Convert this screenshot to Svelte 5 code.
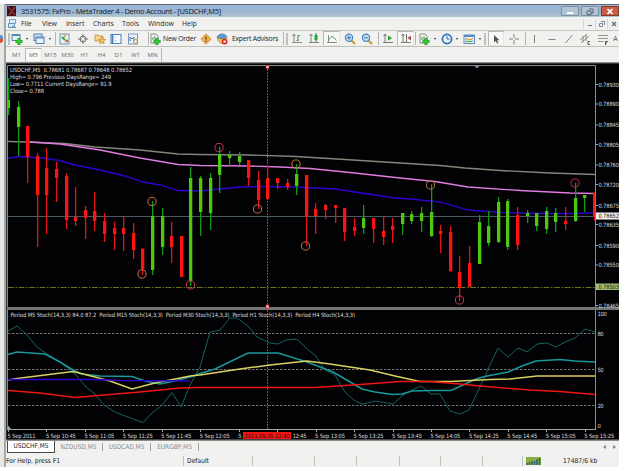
<script lang="ts">
    type Candle = [number, number, number, number, string];

    const STEP = 9.605;

    const menus: [string, number][] = [
        ['File', 21], ['View', 24], ['Insert', 27], ['Charts', 29],
        ['Tools', 26], ['Window', 34], ['Help', 20],
    ];

    // kind, cell width, pressed
    const tools: [string, number, boolean?][] = [
        ['grip', 5], ['newchart', 12], ['caret', 8], ['profiles', 16], ['caret', 5], ['sep', 4],
        ['market', 18], ['cross', 17], ['folder', 17], ['panel', 16], ['tester', 17], ['sep', 8],
        ['order', 12], ['label:New Order', 37], ['diamond', 16], ['globe', 16],
        ['label:Expert Advisors', 50], ['sep', 4], ['grip', 5],
        ['bars', 16], ['candles', 18], ['line', 17, true], ['zoomin', 20], ['zoomout', 14], ['sep', 5],
        ['scroll', 18], ['shift', 17, true], ['sep', 2], ['indicator', 16], ['caret', 6],
        ['clock', 17], ['caret', 4], ['template', 19], ['caret', 4], ['grip', 6],
        ['cursor', 16, true], ['plus', 20], ['sep', 2], ['vline', 16], ['hline', 19],
        ['diag', 15], ['channel', 18], ['fibo', 18], ['text', 7],
    ];

    const frames = ['M1', 'M5', 'M15', 'M30', 'H1', 'H4', 'D1', 'W1', 'MN'];

    // high, low, body top, body bottom, direction
    const candles: Candle[] = [
        [78, 115, 100, 108, 'up'], [101, 156, 107, 127, 'up'], [126, 183, 126, 157, 'down'],
        [153, 247, 156, 195, 'down'], [148, 234, 168, 195, 'down'], [162, 202, 169, 178, 'down'],
        [173, 229, 176, 220, 'down'], [187, 226, 217, 221, 'down'], [206, 239, 210, 218, 'down'],
        [192, 231, 211, 221, 'down'], [213, 242, 221, 234, 'down'], [222, 250, 228, 234, 'down'],
        [216, 251, 228, 234, 'down'], [223, 259, 233, 250, 'down'], [248, 275, 249, 269, 'down'],
        [201, 275, 216, 270, 'up'], [208, 255, 216, 247, 'up'], [222, 263, 236, 247, 'down'],
        [236, 277, 236, 277, 'down'], [167, 286, 178, 281, 'up'], [176, 236, 178, 212, 'up'],
        [173, 230, 178, 213, 'up'], [147, 193, 154, 175, 'up'], [151, 166, 155, 158, 'up'],
        [152, 165, 156, 162, 'up'], [160, 186, 160, 178, 'down'], [171, 209, 180, 200, 'down'],
        [165, 199, 178, 199, 'down'], [178, 189, 178, 183, 'down'], [179, 190, 183, 187, 'down'],
        [164, 195, 174, 186, 'up'], [175, 246, 175, 216, 'down'], [203, 234, 209, 216, 'down'],
        [204, 219, 205, 210, 'down'], [205, 223, 205, 208, 'down'], [208, 241, 208, 232, 'down'],
        [218, 236, 227, 231, 'down'], [205, 234, 218, 228, 'up'], [218, 243, 218, 229, 'down'],
        [216, 245, 231, 237, 'down'], [218, 243, 226, 230, 'down'], [213, 235, 213, 224, 'up'],
        [211, 224, 214, 221, 'up'], [207, 232, 213, 221, 'up'], [184, 237, 212, 236, 'up'],
        [225, 253, 231, 234, 'down'], [226, 272, 232, 271, 'down'], [256, 301, 272, 288, 'down'],
        [246, 287, 263, 287, 'down'], [215, 264, 222, 264, 'up'], [211, 246, 226, 243, 'up'],
        [197, 243, 202, 242, 'up'], [199, 250, 201, 247, 'up'], [207, 250, 215, 245, 'down'],
        [210, 223, 213, 216, 'up'], [213, 231, 213, 226, 'up'], [207, 234, 211, 229, 'up'],
        [208, 232, 213, 222, 'up'], [207, 230, 221, 224, 'down'], [183, 222, 198, 221, 'up'],
        [195, 212, 195, 198, 'up'], [192, 221, 193, 217, 'down'],
    ];

    const swings: [number, number, string][] = [
        [142, 274, '#d07048'], [152, 201.5, '#d07048'], [190.5, 285, '#c83858'],
        [219, 147.5, '#c83858'], [257.5, 209, '#d07048'], [296, 164, '#c07838'],
        [305.5, 246, '#c07838'], [430.5, 185, '#b87038'], [459.5, 300, '#c83858'],
        [575, 183, '#c82848'],
    ];

    const averages: [string, string][] = [
        ['#85857c', '8,141.5 27,142 65,143.5 95,147 140,150 178,154 200,154.5 248,155 296,156.5 345,159.5 400,163 440,165.5 465,168 500,170.5 550,173 595,174.5'],
        ['#e07ce0', '30,142 60,144 100,150 140,158 178,164.5 200,165.5 248,166 280,167 310,168.5 350,172.5 400,178 435,181.5 468,187 520,190.5 570,193 595,193.5'],
        ['#3000d0', '8,158 22,156.5 40,158 57,160 75,165 100,170 125,176 143,182 160,185 178,190.5 200,191 240,187 260,186.5 295,187 335,189 365,193.5 395,198 410,199 440,202 468,210 500,212.3 540,213.5 580,213.5 595,212.5'],
    ];

    const stoch: [string, number, string][] = [
        ['#126460', 1, '8,331 17,326 27,335 37,347 47,354 60,362 75,374 86,387 94,393 104,405 115,412 125,416 143,422.5 152,413 162,405 172,392.5 181,407 190,385 200,367 210,332 220,330 230,318 237,318 248,326 257,337 270,343 278,344 286,340 297,339 306,348 316,356 325,370 335,375 345,392 355,401 363,404 375,401 393,404 402,396 412,390 421,386 431,394 440,394 450,411 460,414 469,410 480,387 489,367 498,348 508,357 518,348 527,352 537,344 547,343 556,347 565,342 575,338 585,329 595,332'],
        ['#18989a', 1.5, '8,354.5 17,352 45,354 60,362 73,370 82,374 100,376 132,376.5 145,381 160,384 175,381 190,377 200,373.5 215,369 248,353 278,353 307,362 333,372 345,379 362,389 375,392 393,394.5 402,394 412,391 430,390.5 451,390.5 463,385 476,379 487,376 508,372 522,366 536,361 560,359.5 575,361 595,362'],
        ['#d8d060', 1.5, '8,380 17,378.5 45,375 73,371.5 95,377 110,381 132,389 155,383 190,376 200,375 240,369 270,365 307,361 330,364 350,367 370,370 395,376 420,381.5 450,381.5 490,379.5 510,379 537,376 595,376'],
        ['#3000d0', 1.5, '8,379.5 100,379.5 120,380.5 190,381'],
        ['#f01414', 1.5, '8,390.5 40,393 75,397.5 110,394.5 140,392 180,388 200,387.5 315,387.5 360,384.5 400,381.5 430,381.5 460,384 480,386 530,390 560,391.5 595,394.5'],
    ];

    const prices: [string, number][] = [
        ['0.78930', 84.5], ['0.78890', 104], ['0.78845', 125], ['0.78805', 144.5],
        ['0.78760', 165], ['0.78720', 184.5], ['0.78675', 205.5], ['0.78635', 224.5],
        ['0.78590', 245.5], ['0.78550', 265], ['0.78465', 305.5],
    ];

    const levels: [string, number][] = [['100', 313.5], ['80', 333.5], ['50', 369.5], ['20', 405.5], ['0', 426]];

    // the cursor's time flag hides part of the 12:25 and 12:45 labels
    const times: [string, number, number][] = [
        ['5 Sep 2011', 0, 28], ['5 Sep 10:45', 0, 30], ['5 Sep 11:05', 0, 30], ['5 Sep 11:25', 0, 30],
        ['5 Sep 11:45', 0, 30], ['5 Sep 12:05', 0, 30], ['5', 0, 3], ['12:45', 16, 14],
        ['5 Sep 13:05', 0, 30], ['5 Sep 13:25', 0, 30], ['5 Sep 13:45', 0, 30], ['5 Sep 14:05', 0, 30],
        ['5 Sep 14:25', 0, 30], ['5 Sep 14:45', 0, 30], ['5 Sep 15:05', 0, 30], ['5 Sep 15:25', 0, 30],
    ];

    const info: [string, number, number][] = [
        ['USDCHF,M5  0.78681 0.78687 0.78648 0.78652', 72.3, 122],
        ['High= 0.796 Previous DaysRange= 249', 78.8, 101],
        ['Low= 0.7711 Current DaysRange= 91.9', 85.8, 101.5],
        ['Close= 0.788', 92.8, 34],
    ];

    const tabs = ['USDCHF,M5', 'NZDUSD,M5', 'USDCAD,M5', 'EURGBP,M5'];
    const statusCells = [69, 62, 42, 43, 41, 42, 40];
</script>

{#snippet icon(kind: string)}
    <svg class="icon" width="12" height="12" viewBox="0 0 12 12" fill="none">
        {#if kind === 'newchart' || kind === 'indicator' || kind === 'order'}
            {#if kind === 'newchart'}
                <rect x="1" y="1.5" width="8" height="6" fill="#e4eef8" stroke="#5a86b4" />
                <path d="M1 2.5h8" stroke="#5a86b4" />
            {:else}
                <path d="M2 1h5l2 2v7H2z" fill="#f4f4f0" stroke="#8a8c84" />
                <path d="M4 7V4M6 7V3" stroke="#58906c" />
            {/if}
            <path d="M8 5v7M4.5 8.5h7" stroke="#189424" stroke-width="3" />
            <path d="M8 5.500v6M5 8.500h6" stroke="#38c838" stroke-width="1.800" />
        {:else if kind === 'profiles'}
            <rect x="1" y="1" width="8" height="6.5" fill="#cfe2f4" stroke="#5080b8" />
            <rect x="3" y="4" width="8" height="6.5" fill="#e8f2fc" stroke="#5080b8" />
            <path d="M3 5h8" stroke="#5080b8" />
        {:else if kind === 'market'}
            <rect x="1" y="1" width="9" height="10" fill="#e6f2f6" stroke="#7098b4" />
            <path d="M3 4l3 3" stroke="#30a040" stroke-width="2" />
            <path d="M5 4l2-2M6 9l3-2" stroke="#c8a030" stroke-width="1.5" />
            <path d="M7 7l2 2" stroke="#d04838" stroke-width="1.5" />
        {:else if kind === 'cross'}
            <circle cx="6" cy="6" r="3" stroke="#70706c" />
            <path d="M6 1v4M6 7v4M1 6h4M7 6h4" stroke="#70706c" />
        {:else if kind === 'folder'}
            <path d="M1 2h3l1 1h4v5H1z" fill="#f4d890" stroke="#c89850" />
            <path d="M8 4l1 2.3 2.5.2-2 1.7.7 2.5L8 9.4l-2.2 1.3.7-2.5-2-1.7 2.5-.2z" fill="#f8cc50" stroke="#c87828" stroke-width=".7" />
        {:else if kind === 'panel'}
            <rect x="1" y="1.5" width="10" height="9" fill="#f4f8fc" stroke="#4c80bc" />
            <path d="M2.500 2v8" stroke="#4c80bc" stroke-width="1.800" />
            <path d="M5 4.500h1M5 7.500h1" stroke="#90a8c0" />
        {:else if kind === 'tester'}
            <rect x="1.5" y="1" width="9" height="10" fill="#e8f0f8" stroke="#7c9cc0" />
            <path d="M3 8V4l2 2 2-2v4" stroke="#5078a8" />
            <circle cx="8.5" cy="8.5" r="2" stroke="#b49450" />
        {:else if kind === 'diamond'}
            <path d="M6 .8L11.2 6 6 11.2.8 6z" fill="#f0b050" stroke="#d09840" />
            <path d="M6 3.5v3M6 7.5V9" stroke="#60401c" stroke-width="1.3" />
        {:else if kind === 'globe'}
            <path d="M1 4c2-4 8-4 10 0L9 6H3z" fill="#5c9cd4" stroke="#3c74a8" stroke-width=".7" />
            <path d="M1 4.5c3 2 7 2 10 0-.5 4-2.5 6-5 6S1.5 8 1 4.500z" fill="#ecc45c" stroke="#b08838" stroke-width=".6" />
            <circle cx="8.6" cy="8.6" r="2.9" fill="#d82424" />
            <rect x="7.5" y="7.5" width="2.2" height="2.2" fill="#fff" />
        {:else if kind === 'bars'}
            <path d="M3 1v9M1 9.5h10M1.5 3L3 1l1.5 2" stroke="#84887e" />
            <path d="M7 2v6M7 2.5h2M5.5 7.5H7" stroke="#3c9844" />
        {:else if kind === 'candles'}
            <path d="M3 1v9M1 9.5h10M1.5 3L3 1l1.5 2" stroke="#84887e" />
            <path d="M8 0v9" stroke="#1c8c28" />
            <rect x="6.5" y="2" width="3" height="5" fill="#28a838" />
        {:else if kind === 'line'}
            <path d="M2.5 2v8M1 9.5h10" stroke="#84887e" />
            <path d="M2.5 7l3-3.5 2 .5 3 3.5" stroke="#5c946c" />
        {:else if kind === 'zoomin' || kind === 'zoomout'}
            <path d="M7.5 7.5L11 11" stroke="#c89c38" stroke-width="2.2" />
            <circle cx="5" cy="4.8" r="3.6" fill="#c4e0f4" stroke="#4884bc" stroke-width="1.2" />
            <path d={kind === 'zoomin' ? 'M5 3v3.6M3.2 4.8h3.6' : 'M3.2 4.8h3.6'} stroke="#2c68a4" />
        {:else if kind === 'scroll' || kind === 'shift'}
            <path d="M3 1v9M1 9.5h10M1.5 3L3 1l1.5 2" stroke="#787c78" />
            {#if kind === 'scroll'}
                <path d="M6 2.5L10 5 6 7.8z" fill="#28a038" />
            {:else}
                <path d="M6.5 1v8" stroke="#707470" />
                <path d="M11 2.5L7.5 5 11 7.5z" fill="#a04c40" />
            {/if}
        {:else if kind === 'clock'}
            <circle cx="6" cy="6" r="4.6" fill="#eaf4fc" stroke="#2c70b8" stroke-width="1.7" />
            <path d="M6 3v3h2.5" stroke="#48607c" />
        {:else if kind === 'template'}
            <rect x="1" y="2" width="10.5" height="8.5" fill="#f0f4e8" stroke="#5c8cc0" />
            <path d="M1 3h10.5" stroke="#5c8cc0" stroke-width="2" />
            <path d="M2 6.5l2-1 2 1.5 4-1.5" stroke="#c88430" />
            <path d="M2 9l2-1 2 .8L10 8" stroke="#3c9c4c" />
        {:else if kind === 'cursor'}
            <path d="M4 2v7.500l1.800-1.700 1.200 2.700 1.300-.6L7.100 7.200H9.500z" fill="#545458" />
        {:else if kind === 'plus'}
            <path d="M6 1v4M6 7v4.5M1 6h4M7 6h4" stroke="#84847e" />
        {:else if kind === 'vline'}
            <path d="M6.5 2v8" stroke="#84847e" />
        {:else if kind === 'hline'}
            <path d="M2.5 6.5h7" stroke="#84847e" />
        {:else if kind === 'diag'}
            <path d="M2.5 10l7-8" stroke="#84847e" />
        {:else if kind === 'channel'}
            <path d="M1 7l7-6M2 10l8-7M4 3v6M7 2v6" stroke="#74746e" stroke-width=".8" />
            <path d="M11 8.5H9v3h2" stroke="#444" stroke-width=".9" />
        {:else if kind === 'fibo'}
            <path d="M1 2.5h10M1 5.5h10M1 8.5h6" stroke="#8c8c84" stroke-width=".9" />
            <path d="M8.5 12V8.5H11M8.5 10H10" stroke="#444" stroke-width=".9" />
        {/if}
    </svg>
{/snippet}

<div class="screen">
    <div class="edge"><span class="edge-icon"></span></div>
    <div class="window">
        <header class="titlebar">
            <svg class="logo" width="9" height="10" viewBox="0 0 9 10">
                <rect width="9" height="10" fill="#38141c" />
                <path d="M1 1l3 3M8 1L2 9M5 6l3 3" stroke="#a83038" stroke-width="1.3" />
            </svg>
            <span class="title">3531575: FxPro - MetaTrader 4 - Demo Account - [USDCHF,M5]</span>
            <div class="controls">
                <button aria-label="Minimize"><svg width="8" height="7"><path d="M1 5h6" stroke="#fff" stroke-width="2" /></svg></button>
                <button aria-label="Restore"><svg width="8" height="7"><path d="M3 1h4v4H5M1 3h4v3.500H1z" fill="none" stroke="#5c6874" /></svg></button>
                <button class="close" aria-label="Close"><svg width="8" height="7"><path d="M1.500 1l5 5M6.500 1l-5 5" stroke="#fff" stroke-width="1.700" /></svg></button>
            </div>
        </header>

        <nav class="menubar">
            <svg class="menu-icon" width="9" height="10" viewBox="0 0 9 10" fill="none">
                <path d="M1.500.5h6v4h-6z" fill="#e0eef8" stroke="#78a0c4" />
                <path d="M.5 4.500h6v4h-6z" fill="#d4e8f8" stroke="#6090bc" />
                <path d="M4 7l4 2" stroke="#5c88b0" />
            </svg>
            {#each menus as [name, width]}
                <span class="menu" style:width="{width}px">{name}</span>
            {/each}
            <div class="mdi">
                <span><svg width="8" height="8"><path d="M2 5.500h4" stroke="#607890" /></svg></span>
                <span><svg width="8" height="8"><path d="M3 1.500h3.500V5M1.500 3.500h3v3h-3z" fill="none" stroke="#70889c" /></svg></span>
                <span><svg width="8" height="8"><path d="M2 2l4 4M6 2L2 6" stroke="#587088" stroke-width="1.200" /></svg></span>
            </div>
        </nav>

        <div class="toolbar">
            {#each tools as [kind, width, pressed]}
                <div class="cell" class:pressed style:width="{width}px">
                    {#if kind === 'grip'}
                        <i class="grip"></i>
                    {:else if kind === 'sep'}
                        <i class="sep"></i>
                    {:else if kind === 'caret'}
                        <i class="caret"></i>
                    {:else if kind === 'text'}
                        <span class="letter">A</span>
                    {:else if kind.startsWith('label:')}
                        <span class="label">{kind.slice(6)}</span>
                    {:else}
                        {@render icon(kind)}
                    {/if}
                </div>
            {/each}
        </div>

        <div class="frames">
            {#each frames as frame}
                <span class="frame" class:pressed={frame === 'M5'}>{frame}</span>
            {/each}
        </div>

        <svg class="chart" width="613" height="379" viewBox="6 62 613 379">
            <rect x="6" y="62" width="613" height="379" fill="#020104" />
            <path d="M6 62.500h613" stroke="#8c8c88" />
            <path d="M6 63.500h613" stroke="#303838" />
            <path d="M6.500 63v378" stroke="#303438" />
            <path d="M7.500 429.500V65.500H595.500V429.500" fill="none" stroke="#8a8c8a" />
            <path d="M7 429.500h589" stroke="#a4a4a0" />
            <rect x="7" y="307" width="612" height="3" fill="#747474" />
            <rect x="6" y="439.500" width="613" height="1.500" fill="#8c8c88" />
            <path d="M474 65.500h6l-3 3z" fill="#7890a0" />
            <path d="M8 425.500l3.500 4H8z" fill="#a0b0b8" />

            <path d="M8 216.500h587" stroke="#4a5a62" />
            <path d="M8 287.500h587" stroke="#68741c" stroke-dasharray="6 1.500 1.500 1.500" />
            {#each [333.5, 369.5, 405.5] as y}
                <path d="M8 {y}h587" stroke="#74746e" stroke-dasharray="2.500 1.500" />
            {/each}
            <path d="M267.500 66V307M267.500 310V429" stroke="#d42c48" stroke-dasharray="2 1" />

            {#each averages as [color, points]}
                <polyline {points} fill="none" stroke={color} stroke-width="1.300" />
            {/each}

            {#each candles as [high, low, top, bottom, dir], i}
                {@const x = Math.round(8 + i * STEP)}
                {@const half = i === 0 || i === 61}
                <rect class={dir + '-wick'} {x} y={high} width="1.300" height={low - high} />
                <rect class={dir} x={half && !i ? x : x - 1} y={top} width={half ? 2 : 3.3} height={bottom - top} />
            {/each}

            {#each swings as [cx, cy, color]}
                <circle {cx} {cy} r="4.100" fill="none" stroke={color} />
            {/each}

            {#each stoch as [color, width, points]}
                <polyline {points} fill="none" stroke={color} stroke-width={width} />
            {/each}

            <rect x="266" y="65.500" width="3" height="3" fill="#f0c0c0" stroke="#d02838" stroke-width=".7" />
            <rect x="266" y="305" width="3" height="3" fill="#f0c0c0" stroke="#d02838" stroke-width=".7" />

            {#each info as [line, y, length]}
                <text x="10" {y} textLength={length}>{line}</text>
            {/each}
            <text x="10.500" y="317.200" textLength="344.500">Period M5 Stoch(14,3,3) 84.0 87.2&nbsp; Period M15 Stoch(14,3,3)&nbsp; Period M30 Stoch(14,3,3)&nbsp; Period H1 Stoch(14,3,3)&nbsp; Period H4 Stoch(14,3,3)</text>

            {#each prices as [price, y]}
                <path d="M596 {y}h2" stroke="#a4a4a0" />
                <text x="598.500" y={y + 2.2} textLength="20.500">{price}</text>
            {/each}
            <rect x="596" y="212.500" width="23" height="7" fill="#f4f4f4" />
            <text class="dark" x="598.500" y="218.300" textLength="20.500">0.78652</text>
            <rect x="596" y="283.500" width="23" height="6.500" fill="#a0c070" />
            <text class="dark" x="598.500" y="289" textLength="20.500">0.78503</text>
            {#each levels as [level, y]}
                <text x="597.500" y={y + 2.2} textLength={level.length * 3.1}>{level}</text>
            {/each}

            {#each times as [time, shift, length], i}
                {@const x = 8 + i * 38.45}
                <path d="M{Math.round(x) + 0.5} 430v2" stroke="#a4a4a0" />
                <text x={x + shift - 0.5} y="437.700" textLength={length}>{time}</text>
            {/each}
            <rect x="243" y="432" width="48" height="7" fill="#f41414" />
            <text class="dark" x="244.500" y="437.700" textLength="45">2011.09.05 12:40</text>
        </svg>

        <div class="tabs">
            {#each tabs as tab, i}
                <span class="tab" class:active={i === 0}>{tab}</span>
            {/each}
            <div class="arrows"><i class="left"></i><i class="right"></i></div>
        </div>

        <footer class="status">
            <span class="help">For Help, press F1</span>
            <span class="profile">Default</span>
            {#each statusCells as width}
                <span class="slot" style:width="{width}px"></span>
            {/each}
            <svg class="signal" width="15" height="8" viewBox="0 0 15 8">
                <rect width="15" height="8" fill="#8cae40" />
                <path d="M1 8V6M3.500 8V5M6 8V4M8.500 8V4M11 8V2M13.500 8V1" stroke="#28647c" stroke-width="1.500" />
            </svg>
            <span class="traffic">17487/6 kb</span>
        </footer>
    </div>
</div>

<style>
    :global(body) {
        background: #fff;
    }

    .screen {
        display: flex;
        width: 619px;
        height: 467px;
        padding-top: 4px;
        box-sizing: border-box;
        overflow: hidden;
        font-family: "DejaVu Sans Condensed", "DejaVu Sans", sans-serif;
        font-size: 7px;
        color: #2c2c2c;
        white-space: nowrap;
    }

    .edge {
        width: 6px;
        flex: none;
        box-sizing: border-box;
        padding-top: 31px;
        background: #e6e6e2;
        border-right: 2px solid #a0a8ac;
    }

    .edge-icon {
        display: block;
        width: 3px;
        height: 8px;
        border-radius: 0 4px 4px 0;
        background: linear-gradient(#5c8cc4 50%, #e05030 50%);
    }

    .window {
        display: flex;
        flex-direction: column;
        width: 613px;
        background: #f1f1ef;
    }

    .titlebar {
        display: flex;
        align-items: center;
        height: 13px;
        box-sizing: border-box;
        border-top: 1px solid #60686c;
        background: linear-gradient(#9cb8dc, #9cb6d0 65%, #b4c8cc);
    }

    .logo {
        margin-left: 1px;
    }

    .title {
        margin-left: 5px;
        font: 7.5px "Open Sans", sans-serif;
        letter-spacing: -0.32px;
        color: #14202c;
    }

    .controls {
        display: flex;
        gap: 2px;
        margin-left: auto;
    }

    .controls button {
        display: flex;
        align-items: center;
        justify-content: center;
        width: 18px;
        height: 10px;
        padding: 0;
        border: 1px solid #7c90a4;
        background: #b0c4d4;
    }

    .controls .close {
        border-color: #803c30;
        background: #c85c44;
    }

    .menubar {
        display: flex;
        align-items: center;
        height: 14px;
        font: 7px "Open Sans", sans-serif;
        letter-spacing: -0.1px;
        box-sizing: border-box;
        border-bottom: 1px solid #c4c4c0;
    }

    .menu-icon {
        margin: 0 4px 0 2px;
    }

    .menu {
        flex: none;
    }

    .mdi {
        display: flex;
        margin-left: auto;
    }

    .mdi span {
        display: flex;
        align-items: center;
        justify-content: center;
        width: 11px;
        height: 10px;
        border-left: 1px solid #d0d8dc;
    }

    .toolbar {
        display: flex;
        height: 16px;
        box-sizing: border-box;
        border-bottom: 1px solid #c0c0b8;
    }

    .cell {
        display: flex;
        flex: none;
        align-items: center;
        justify-content: center;
    }

    .cell.pressed,
    .frame.pressed {
        box-sizing: border-box;
        border: 1px solid #b8b8b4;
        border-right-color: #e4e4e0;
        border-bottom-color: #e4e4e0;
        background: #f8f8f7;
    }

    .icon {
        flex: none;
    }

    .grip {
        width: 2px;
        height: 12px;
        background: #c0c0bc;
    }

    .sep {
        width: 1px;
        height: 13px;
        margin-left: auto;
        background: #b4b4b0;
    }

    .caret {
        border: 1.5px solid transparent;
        border-top: 2px solid #303030;
        border-bottom: 0;
    }

    .label {
        font: 6.8px "Open Sans", sans-serif;
        letter-spacing: -0.2px;
        color: #242424;
    }

    .letter {
        color: #505050;
    }

    .frames {
        display: flex;
        align-items: center;
        height: 15px;
        padding-left: 2px;
        color: #686864;
        font: 6px "Open Sans", sans-serif;
    }

    .frame {
        width: 17px;
        line-height: 14px;
        text-align: center;
    }

    .frame.pressed {
        line-height: 12px;
    }

    .frame:last-child {
        border-right: 1px solid #b8b8b4;
    }

    .chart {
        display: block;
        flex: none;
    }

    .chart text {
        font: 5.8px "DejaVu Sans Condensed", "DejaVu Sans", sans-serif;
        fill: #dcdcd6;
        white-space: pre;
    }

    .chart text.dark {
        fill: #181810;
    }

    .up {
        fill: #4cc810;
    }

    .up-wick {
        fill: #0c9c14;
    }

    .down {
        fill: #fc1410;
    }

    .down-wick {
        fill: #e41414;
    }

    .tabs {
        display: flex;
        align-items: flex-start;
        height: 13px;
        padding-left: 1px;
        color: #8c8c88;
        font-size: 6.5px;
    }

    .tab {
        width: 48px;
        height: 8px;
        margin-top: 2px;
        box-sizing: border-box;
        line-height: 8px;
        text-align: center;
        border-right: 1px solid #a4a4a0;
    }

    .tab.active {
        height: 12px;
        margin-top: 0;
        line-height: 11px;
        color: #202020;
        background: #fff;
        border: 1px solid #484844;
        border-top: 0;
    }

    .arrows {
        display: flex;
        gap: 7px;
        margin: 4px 3px 0 auto;
    }

    .arrows i {
        border: 2px solid transparent;
    }

    .arrows .left {
        border-right: 3px solid #888;
        border-left: 0;
    }

    .arrows .right {
        border-left: 3px solid #888;
        border-right: 0;
    }

    .status {
        display: flex;
        align-items: center;
        height: 13px;
        font-size: 6.7px;
        color: #202020;
    }

    .help {
        width: 178px;
        box-sizing: border-box;
        border-right: 1px solid #c0c0bc;
        line-height: 10px;
    }

    .profile {
        width: 0;
        text-indent: 3px;
    }

    .slot {
        height: 10px;
        box-sizing: border-box;
        border-right: 1px solid #c0c0bc;
    }

    .signal {
        margin-left: 3px;
    }

    .traffic {
        margin-left: 22px;
    }
</style>
